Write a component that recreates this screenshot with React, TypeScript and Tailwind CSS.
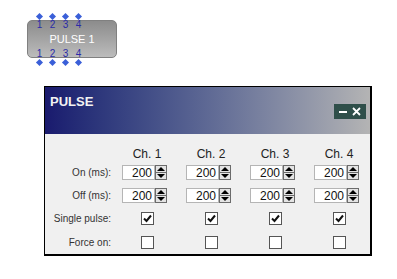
import React from 'react';

const channels = [1, 2, 3, 4];

const Spinner: React.FC = () => (
  <div className="flex h-[15px] w-[12px] flex-col border border-[#6b6b6b] bg-[#e4e4e4]">
    <div className="flex flex-1 items-center justify-center border-b border-[#6b6b6b]">
      <div className="h-0 w-0 border-x-[4px] border-b-[4px] border-x-transparent border-b-black" />
    </div>
    <div className="flex flex-1 items-center justify-center">
      <div className="h-0 w-0 border-x-[4px] border-t-[4px] border-x-transparent border-t-black" />
    </div>
  </div>
);

const NumberBox: React.FC<{ value: number }> = ({ value }) => (
  <div className="ml-[7px] flex h-[15px] w-[45px]">
    <div className="flex h-full flex-1 items-center justify-end border border-[#b5b5b5] bg-white pr-[2px] text-[12px] leading-none text-[#111]">
      {value}
    </div>
    <Spinner />
  </div>
);

const Check: React.FC<{ checked: boolean }> = ({ checked }) => (
  <div className="flex justify-center">
    <div className="flex h-[13px] w-[13px] items-center justify-center border border-[#555] bg-white">
      {checked && (
        <svg width="9" height="9" viewBox="0 0 9 9">
          <path d="M1 4.5 L3.5 7 L8 1.5" fill="none" stroke="#111" strokeWidth="2" />
        </svg>
      )}
    </div>
  </div>
);

const Pins: React.FC<{ bottom?: boolean }> = ({ bottom }) => (
  <div className={bottom ? 'absolute left-[5px] top-[28px] flex' : 'absolute left-[5px] -top-[8px] flex'}>
    {channels.map((n) => (
      <div key={n} className="flex w-[13px] flex-col items-center">
        {!bottom && (
          <div className="flex h-[7px] w-[7px] items-center justify-center">
            <div className="h-[5px] w-[5px] rotate-45 bg-[#3a5fd8]" />
          </div>
        )}
        <div className="h-[10px] text-[10px] leading-[10px] text-[#2b2ba8]">{n}</div>
        {bottom && (
          <div className="flex h-[7px] w-[7px] items-center justify-center">
            <div className="h-[5px] w-[5px] rotate-45 bg-[#3a5fd8]" />
          </div>
        )}
      </div>
    ))}
  </div>
);

export default function App() {
  return (
    <div className="h-[279px] w-[397px] bg-white pt-[20px] font-['Liberation_Sans',Arial,sans-serif]">
      {/* node on the canvas */}
      <div className="relative ml-[27px] flex h-[38px] w-[90px] items-center justify-center rounded-[5px] border border-[#808080] bg-gradient-to-b from-[#8c8c8c] to-[#bcbcbc] text-[11px] text-white">
        <Pins />
        PULSE 1
        <Pins bottom />
      </div>

      {/* dialog */}
      <div className="ml-[44px] mt-[28px] w-[328px] border-l border-t border-r-2 border-b-2 border-black">
        <div className="flex h-[47px] items-start justify-between bg-gradient-to-r from-[#1a1a6e] to-[#b4b4b4] pl-[5px] pr-[4px]">
          <div className="pt-[7px] text-[13px] font-bold leading-[15px] text-[#f2f2f2]">PULSE</div>
          <div className="mt-[17px] flex h-[15px] w-[32px] items-center justify-center gap-[5px] bg-[#2f4f4a]">
            <div className="h-[2px] w-[8px] bg-white" />
            <svg width="9" height="9" viewBox="0 0 9 9">
              <path d="M1 1 L8 8 M8 1 L1 8" stroke="#fff" strokeWidth="1.8" />
            </svg>
          </div>
        </div>
        <div className="h-[120px] bg-[#f0f0f0] pt-[12px] text-[#222]">
          <div className="grid h-[16px] grid-cols-[70px_repeat(4,64px)] text-[12px] leading-[16px]">
            <div />
            {channels.map((c) => (
              <div key={c} className="text-center">Ch. {c}</div>
            ))}
          </div>
          <div className="mt-[3px] grid h-[15px] grid-cols-[70px_repeat(4,64px)] items-center">
            <div className="pr-[4px] text-right text-[10px] text-[#333]">On (ms):</div>
            {channels.map((c) => (
              <NumberBox key={c} value={200} />
            ))}
          </div>
          <div className="mt-[8px] grid h-[15px] grid-cols-[70px_repeat(4,64px)] items-center">
            <div className="pr-[4px] text-right text-[10px] text-[#333]">Off (ms):</div>
            {channels.map((c) => (
              <NumberBox key={c} value={200} />
            ))}
          </div>
          <div className="mt-[8px] grid h-[13px] grid-cols-[70px_repeat(4,64px)] items-center">
            <div className="pr-[4px] text-right text-[10px] text-[#333]">Single pulse:</div>
            {channels.map((c) => (
              <Check key={c} checked />
            ))}
          </div>
          <div className="mt-[11px] grid h-[13px] grid-cols-[70px_repeat(4,64px)] items-center">
            <div className="pr-[4px] text-right text-[10px] text-[#333]">Force on:</div>
            {channels.map((c) => (
              <Check key={c} checked={false} />
            ))}
          </div>
        </div>
      </div>
    </div>
  );
}
